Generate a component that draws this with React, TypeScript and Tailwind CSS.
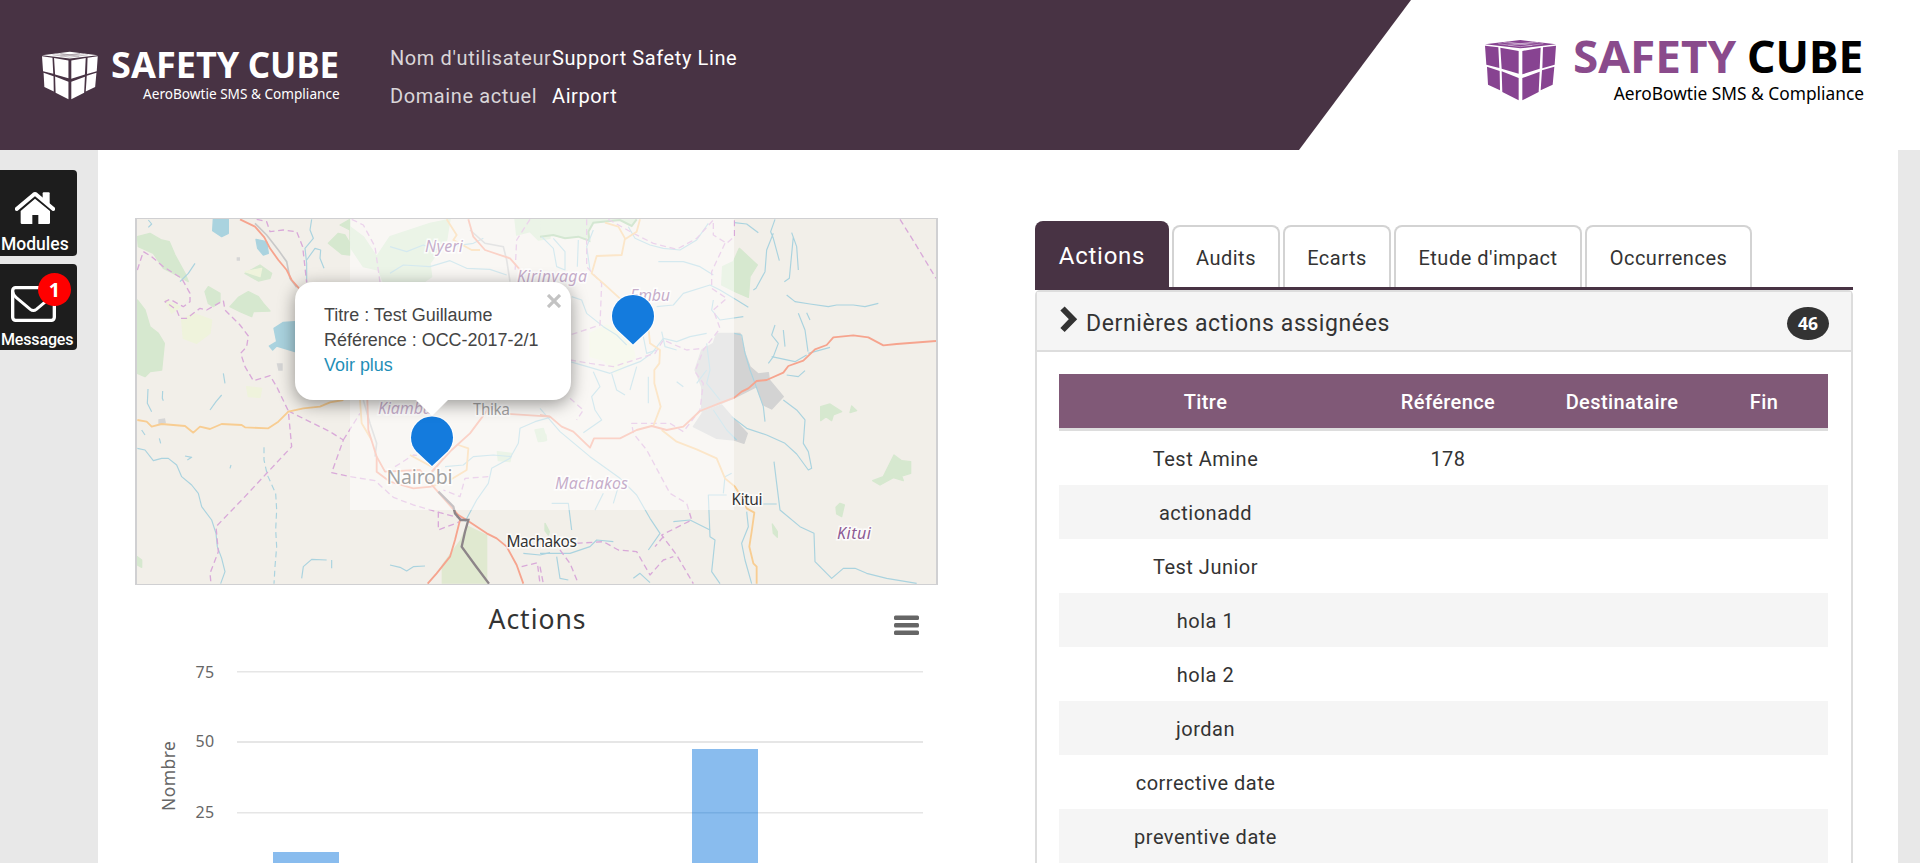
import React from "react";

type Line = { d: string; dash?: boolean };

const water = "#aad3df";
const border = "#d9a9d9";

const westGreens = [
  "M22 80L60 70L95 90L118 95L135 135L165 190L175 215L130 190L100 175L70 130L25 110Z",
  "M22 270L45 300L60 350L85 370L103 400L95 480L60 485L45 500L22 490Z",
  "M300 290L325 262L355 245L385 260L400 280L420 303L370 305L365 320L330 305Z",
  "M225 245L235 230L270 250L270 275L250 290L235 280Z",
  "M345 190L390 165L425 190L420 205L385 213Z",
  "M595 100L625 70L645 75L660 100V135L635 132Z",
  "M630 45L660 28V60Z",
  "M22 1040L35 1050V1072L22 1065Z",
  "M1155 28H1260V85L1225 90L1200 65L1160 75Z",
  "M660 50L700 80L740 140L780 80L900 40L960 28L950 90L900 160L905 200L880 217H760L745 180L700 170L660 110Z",
  "M1215 660L1240 655L1250 690L1225 695Z",
  "M1102 725L1145 730L1140 755L1105 752Z",
];
const westPale = [
  "M155 330L190 310L245 330L240 370L200 400L160 385Z",
  "M350 530L395 535L390 562L355 560Z",
  "M345 185L395 175L390 200Z",
  "M105 270L150 290L125 310Z",
];
const eastGreens = [
  "M0 28H290L275 48L240 28L160 38L145 65L148 92L115 80L75 85L40 75L0 80Z",
  "M598 115L652 165L630 200L625 262L585 245L545 225L548 170L580 155Z",
  "M842 590L870 582L905 605L880 615L875 632L858 620L842 632Z",
  "M935 588L950 602L930 608Z",
  "M1062 735L1085 752L1112 755V790L1085 798L1090 812L1060 803L1020 825L998 812L1030 800Z",
  "M888 892L900 880L913 885L905 920L890 912Z",
  "M697 942L712 965V982L700 970Z",
  "M0 660L18 675V692L0 695Z",
  "M15 940L28 965L25 975L15 962Z",
];

const westWater: Line[] = [
  { d: "M22 715L45 720L70 752L95 745L115 745L140 765L155 800L185 825L205 850L215 890L245 930L258 970L262 1010L275 1045L285 1085L272 1121" },
  { d: "M402 712L402 750L412 795L437 850L440 900L437 960L440 1010L435 1070L432 1121", dash: true },
  { d: "M545 28L540 60L550 85L525 115L530 160L530 217" },
  { d: "M530 150L555 115L572 120L570 145L582 175" },
  { d: "M54 537L52 580L65 605M98 543L97 565L100 572M240 600L258 575L275 555M285 520L280 490" },
  { d: "M780 1065L810 1072L830 1083L850 1070L885 1068M515 1105L520 1070L545 1048L590 1050M605 1050V1075" },
  { d: "M780 110L830 125L880 105L915 118L960 110L1030 100L1060 85M780 190L820 165L900 170L960 152L1010 175L1080 178L1130 195" },
  { d: "M1260 622L1215 635L1170 655L1165 700L1140 745L1085 775L1075 820L1040 870L1005 935" },
  { d: "M945 770L1000 765L1030 740L1090 735L1145 740" },
  { d: "M55 30L65 42L55 52M195 160L175 190L150 215M165 738L185 742L172 750M300 775L303 765M88 685L92 700M35 660L45 675" },
  { d: "M1180 1030L1230 1035L1260 1028" },
];
const westBorders: Line[] = [
  { d: "M22 180L40 125L65 140L100 170L155 205L180 250L180 275L160 290L120 268L105 275L140 300L150 325L170 325L210 295L230 300L280 272L285 300L330 345L355 378L350 410L332 430L345 470L370 512L420 497L440 530L475 603L485 710L410 790L340 865L258 950L265 1025L240 1090L243 1121", dash: true },
  { d: "M475 603L525 628L600 665L640 690L605 788L660 800L735 812L790 862L850 885L930 908L995 925", dash: true },
  { d: "M640 690L690 610M380 28L410 35L420 65L460 60L500 65L518 110L530 217M665 28L700 45L735 110L750 217M1200 28L1160 90L1155 190", dash: true },
  { d: "M795 770L850 735L905 740M925 905V960L990 935M1175 1070L1222 1058L1230 1121M1075 800L1005 805L990 860L940 840", dash: true },
];
const eastWater: Line[] = [
  { d: "M705 28L692 65L700 85L718 152M700 70L680 120L675 185L648 235L640 240M755 68L770 110L775 180M760 80L748 205L733 215" },
  { d: "M740 255L765 275L810 282L865 290L890 285L940 285L975 290L1015 280" },
  { d: "M775 310L795 360L804 425M800 308L810 330M705 345L695 375L715 400L700 440L685 460M695 440L765 455L800 435M730 360L735 410M740 495L775 500L795 482M805 430L870 412" },
  { d: "M583 370L605 375L615 430L630 480L642 512L670 590L675 635" },
  { d: "M575 620L620 655L680 675L735 700L770 732L805 780L815 775L805 725L790 700L795 630L770 600L730 570" },
  { d: "M702 755L710 820L720 900L780 950L822 970L825 1055L875 1105L910 1075L945 1075L980 1090L1040 1105L1130 1120" },
  { d: "M583 38L620 42L655 68M0 595L60 665L150 740L240 805L290 855L330 925L360 970L325 1020" },
  { d: "M670 882L710 882M560 855H505L510 980L525 990L515 1085L540 1121M620 905L625 950L605 1000L615 1050L635 1121" },
  { d: "M95 260L125 270L140 310L190 350L230 375L260 405M90 455L160 475L210 490L260 470L300 455L335 430L370 385L410 395L450 380L500 370" },
  { d: "M265 50L285 85L330 105L370 115L420 120L470 90L505 40M355 155L430 155L480 170L520 195M350 290L400 285L430 250L510 225L540 240L590 270L625 292" },
  { d: "M160 485L180 530L155 560L165 600L185 630L130 668M215 490L230 540L255 555M310 380L320 430L350 420M365 365L375 410L410 420" },
  { d: "M500 400L510 480L500 520L540 570M520 600L560 660L590 690M575 790L555 800L550 850M35 880L85 880L95 960M0 1030L90 1030L150 1010L170 990L220 995" },
  { d: "M280 1105L300 1090L330 1118M50 1040L60 1105L85 1110M400 935L450 930L510 960M160 60L140 110L150 180M5 80L40 115L50 170L75 180L75 125L40 85M115 90L112 170" },
  { d: "M520 270L515 300L540 330L610 320M500 480L470 520M290 470L270 540M325 500V580M410 515L430 530M190 850L165 900M235 830L220 880" },
];
const eastBorders: Line[] = [
  { d: "M1080 28L1125 100L1188 205", dash: true },
  { d: "M140 28L140 170L185 220L180 345L90 375M205 28L280 70L340 100L410 118L470 85L520 30L520 75L560 100L583 80V28", dash: true },
  { d: "M555 100L515 185L515 235L560 265L520 300L540 355L490 420L465 485L490 520L480 600L430 665L390 640L275 640L280 670L320 720L390 850L440 880L455 930L365 975L410 1035L460 1121", dash: true },
  { d: "M90 450L150 460L220 470L345 430L370 390L440 420L490 415M90 565L130 600L110 630M60 1020L90 1060L115 1121M110 1000L190 995L235 1020L290 1025L330 1095L370 1050L400 1040", dash: true },
  { d: "M0 1070L10 1121M370 980L345 1010", dash: true },
];

const redRoadsWest = [
  "M330 28L375 50L403 82L420 115L445 150L470 180L485 210L507 235",
  "M1015 28L1030 80L1065 120L1140 145L1175 185",
  "M712 570L715 660L740 740L765 785L870 780L910 830L985 915L1010 930L1070 970L1100 985L1130 1010L1160 1065L1180 1121",
  "M990 930L975 990L960 1040L920 1090L893 1121",
  "M740 740V785L780 815L850 835L905 830",
  "M905 785L965 720L1020 670L1080 590L1110 610L1260 620",
];
const orangeRoadsWest = [
  "M22 630L50 635L65 650L95 642L165 648L190 668L210 650L240 657L275 642L335 645L345 652L415 655L445 635L475 605L520 595L570 590L600 577L640 570",
  "M950 28L980 75L970 90L1025 120L1050 120",
  "M690 570L695 640L725 690M985 705L1015 715L1010 780L960 810L905 830",
  "M840 735L905 770",
];
const redRoadsEast = [
  "M0 615L30 620L65 650L100 665L150 713L162 685L240 685L290 660L335 648L380 660L430 650L480 603L530 583L583 563L605 545L625 535L650 513L680 510L730 488L745 468L790 452L825 418L860 405L880 382L940 376L985 382L1030 406L1070 402L1188 393",
];
const orangeRoadsEast = [
  "M195 38L235 50L255 85L245 135L170 138L155 190L190 220L250 275L325 350L330 400L360 420L358 460L343 480V520L362 590L340 648",
  "M300 28L290 65L255 88",
  "M365 660L410 695L470 718L530 745L555 805L585 830L610 870L620 895L643 908L635 965L628 1010L640 1060L650 1070V1121",
];

function Lines({ items, color, width }: { items: Line[]; color: string; width: number }) {
  return (
    <>
      {items.map((l) => (
        <path key={l.d} d={l.d} fill="none" stroke={color} strokeWidth={width} strokeLinejoin="round" strokeDasharray={l.dash ? "18 11" : undefined} />
      ))}
    </>
  );
}

function Roads({ items, color }: { items: string[]; color: string }) {
  return (
    <>
      {items.map((d) => (
        <path key={d} d={d} fill="none" stroke={color} strokeWidth={5.5} strokeLinejoin="round" />
      ))}
    </>
  );
}

function Areas({ items, color }: { items: string[]; color: string }) {
  return (
    <>
      {items.map((d) => (
        <path key={d} d={d} fill={color} stroke={color} strokeWidth={4} strokeLinejoin="round" />
      ))}
    </>
  );
}

function Pin({ x, y }: { x: number; y: number }) {
  return (
    <path
      transform={`translate(${x} ${y})`}
      d="M0 0L-15.5 -14.5C-19 -18 -21 -23 -21 -28.5A21 21 0 0 1 21 -28.5C21 -23 19 -18 15.5 -14.5Z"
      fill="#147bdd"
      stroke="#fff"
      strokeWidth={2}
      paintOrder="stroke"
    />
  );
}

function MapCanvas() {
  return (
    <svg className="block h-full w-full" viewBox="137 219 799 365" preserveAspectRatio="none">
      <rect x="137" y="219" width="799" height="365" fill="#f2efe9" />
      <g transform="translate(130 210) scale(0.33333)">
        <Areas items={westGreens} color="#d6e8cf" />
        <Areas items={westPale} color="#eff3dc" />
        <path d="M935 1121V1065L990 990L1010 945L1072 975V1121Z" fill="#e0e9d0" />
        <Areas items={["M250 28H295V70L275 80L248 62Z", "M378 88L410 95L415 130L400 135L383 115Z", "M432 355L460 337L495 335V425L440 408L428 420L418 408L440 395Z"]} color={water} />
        <Lines items={westWater} color={water} width={3.5} />
        <Lines items={westBorders} color={border} width={4} />
        <path d="M375 40L410 75L445 120L470 155L480 205L500 232M1020 60L1065 100L1120 110L1130 150L1140 215M700 570L720 640L740 700L735 740M905 790L940 745" fill="none" stroke="#c9c9c9" strokeWidth="5" />
        <path d="M85 628L105 625L108 640L85 645ZM440 460H458V482H445M320 142H330V152H320Z" fill="#d6d6d6" />
        <Roads items={orangeRoadsWest} color="#f8cd92" />
        <Roads items={redRoadsWest} color="#f6a48e" />
        <path d="M925 845L970 890L975 910L992 930H1015L1005 965L995 1010L1035 1065L1077 1121" fill="none" stroke="#8d8589" strokeWidth="7" />
      </g>
      <g transform="translate(540 210) scale(0.33333)">
        <Areas items={eastGreens} color="#d6e8cf" />
        <Areas items={["M150 370L200 345L270 375L285 440L230 490L190 450L150 440Z"]} color="#eff3dc" />
        <path d="M0 80L40 75L75 85L115 80L148 92L145 65L160 38L240 30L275 48L290 28" fill="none" stroke="#a8cfa4" strokeWidth="6" />
        <Areas items={["M530 370L600 370L615 430L630 470L655 492L685 488L688 510L730 560L695 597L670 585L650 530L580 565L485 605L485 530L465 480L485 420L520 400Z", "M460 650L490 605L545 585L580 625L622 670L612 700L583 690L530 685L490 665Z"]} color="#d3d3d3" />
        <Lines items={eastWater} color={water} width={3.5} />
        <Lines items={eastBorders} color={border} width={4} />
        <Roads items={orangeRoadsEast} color="#f8cd92" />
        <Roads items={redRoadsEast} color="#f6a48e" />
      </g>
      <g fontFamily="'Noto Sans', sans-serif" fontSize="16" stroke="#fff" strokeOpacity={0.8} strokeWidth="3" paintOrder="stroke">
        <g fontStyle="italic" fill="#8c5a94">
          <text x="425" y="251.5" textLength="38">Nyeri</text>
          <text x="517" y="282" textLength="70">Kirinyaga</text>
          <text x="630" y="301" textLength="40">Embu</text>
          <text x="378" y="414" textLength="54">Kiambu</text>
          <text x="555" y="488.5" textLength="73">Machakos</text>
        </g>
        <g fill="#444">
          <text x="473" y="414.5" fontSize="15.5" textLength="37">Thika</text>
          <text x="386.5" y="483.5" fontSize="19.5" textLength="66">Nairobi</text>
        </g>
      </g>
      <rect x="350" y="219" width="384" height="291" fill="#fff" fillOpacity="0.5" />
      <g fontFamily="'Noto Sans', sans-serif" fontSize="15.5" stroke="#fff" strokeOpacity={0.8} strokeWidth="3" paintOrder="stroke" fill="#333">
        <text x="506.5" y="547" textLength="70.5">Machakos</text>
        <text x="731.5" y="504.5" textLength="31">Kitui</text>
        <text x="837" y="539" fontSize="16" fontStyle="italic" fill="#8c5a94" textLength="34">Kitui</text>
      </g>
      <Pin x={432} y={466} />
      <Pin x={633} y={344.5} />
    </svg>
  );
}

function Logo({ className, cube, first, second }: { className: string; cube: string; first: string; second: string }) {
  return (
    <svg className={className} viewBox="0 -20 382 90">
      <g transform="scale(0.33333) translate(-30 -44)">
        <g fill={cube}>
          <path d="M30 57L136 44L243 57L136 69Z" />
          <path d="M30 61L70 66L73 128L34 118ZM76 67L131 77V145L80 130ZM36 124L74 137L75 195L39 178ZM80 138L131 158V225L82 200Z" />
          <path d="M142 77L197 67L194 130L142 147ZM204 66L243 61L239 118L202 129ZM142 158L194 139L191 200L142 225ZM201 135L238 124L233 178L197 195Z" />
        </g>
        <path d="M70 55L136 64L205 55M85 51L136 57L190 51M100 60L175 50M172 61L100 50" fill="none" stroke={second === "#fff" ? "#483344" : "#fff"} strokeOpacity="0.6" strokeWidth="2" />
      </g>
      <g fontFamily="'Noto Sans', sans-serif" fontWeight="700" fontSize="44.5">
        <text x="88" y="33" fill={first} textLength="163.3" lengthAdjust="spacingAndGlyphs">SAFETY</text>
        <text x="262" y="33" fill={second} textLength="116.3" lengthAdjust="spacingAndGlyphs">CUBE</text>
      </g>
      <text x="128.7" y="59.7" fontFamily="'Noto Sans', sans-serif" fontSize="18" fill={second} textLength="250.3" lengthAdjust="spacingAndGlyphs">AeroBowtie SMS &amp; Compliance</text>
    </svg>
  );
}

function Header() {
  return (
    <header className="flex h-[150px] items-start justify-between bg-white">
      <div className="flex h-[150px] w-[1411px] items-start bg-[#483344] pl-[42px] [clip-path:polygon(0_0,100%_0,1299px_100%,0_100%)]">
        <Logo className="mt-[36px] h-[71px] w-[300px]" cube="#fff" first="#fff" second="#fff" />
        <dl className="mt-[39px] ml-12 grid grid-cols-[162px_auto] text-[20px] leading-[38px] tracking-[0.6px] whitespace-nowrap">
          <dt className="text-[#dad6d9]">Nom d'utilisateur</dt>
          <dd className="text-white">Support Safety Line</dd>
          <dt className="text-[#dad6d9]">Domaine actuel</dt>
          <dd className="text-white">Airport</dd>
        </dl>
      </div>
      <Logo className="mt-[20px] mr-[53px] h-[90px] w-[382px]" cube="#874391" first="#8a4b8c" second="#000" />
    </header>
  );
}

function SideNav() {
  return (
    <nav className="flex w-[98px] flex-col gap-2 pt-5 font-medium text-white">
      <a className="flex h-[86px] w-[77px] flex-col rounded-r bg-[#1d1d1d]">
        <svg className="mt-[22px] ml-[15px] h-[33px] w-10 shrink-0" viewBox="0 0 120 99">
          <path d="M60 20L105 57V92Q105 96 101 96H70V69H52V96H21Q17 96 17 92V57Z" fill="#fff" />
          <path d="M4 52L60 6L116 52" fill="none" stroke="#1d1d1d" strokeWidth="19" />
          <path d="M83 4Q83 1 86 1H101Q104 1 104 4V36L83 22Z" fill="#fff" />
          <path d="M5 51L56 8Q60 5 64 8L115 51" fill="none" stroke="#fff" strokeWidth="12" strokeLinecap="round" strokeLinejoin="round" />
        </svg>
        <span className="pt-[7px] pl-px text-[17.5px] leading-6">Modules</span>
      </a>
      <a className="relative flex h-[86px] w-[77px] flex-col rounded-r bg-[#1d1d1d]">
        <svg className="mt-[22px] ml-[11px] h-9 w-[45px] shrink-0" viewBox="0 0 135 108" fill="none" stroke="#fff" strokeWidth="10">
          <rect x="5" y="5" width="125" height="98" rx="9" />
          <path d="M5 17Q7 28 16 35L58 70Q67 77 76 70L118 35Q128 27 130 17" strokeWidth="9" />
        </svg>
        <span className="pt-[6px] pl-px text-[16px] leading-6 tracking-[-0.15px]">Messages</span>
        <span className="absolute top-[9px] left-[38px] flex size-[33px] items-center justify-center rounded-full bg-[#f00] font-['Open_Sans',sans-serif] text-[20px] font-bold">1</span>
      </a>
    </nav>
  );
}

function MapPanel() {
  return (
    <div className="relative h-[367px] w-[803px] border-x-2 border-y border-[#d0d0d2]">
      <MapCanvas />
      <div className="absolute top-[63px] left-[158px] h-[118px] w-[276px] rounded-[18px] bg-white pt-[21px] pl-[29px] font-['Liberation_Sans',sans-serif] text-[17.95px] leading-[25px] tracking-normal text-[#444] shadow-[0_4px_17px_rgba(0,0,0,0.4)]">
        <p>Titre : Test Guillaume</p>
        <p>Référence : OCC-2017-2/1</p>
        <p className="text-[#1f8fb8]">Voir plus</p>
        <svg className="absolute top-[12px] right-2.5 size-[14px]" viewBox="0 0 14 14" stroke="#c3c3c3" strokeWidth="3.2">
          <path d="M1 1L13 13M13 1L1 13" />
        </svg>
        <svg className="absolute top-[117px] left-[120px] h-[17px] w-[34px]" viewBox="0 0 34 17">
          <path d="M0 0H34L17 17Z" fill="#fff" />
        </svg>
      </div>
    </div>
  );
}

function Chart() {
  return (
    <svg className="block h-[278px] w-[803px]" viewBox="135 585 803 278" fontFamily="'Noto Sans', sans-serif">
      <text x="537" y="629" textAnchor="middle" fontSize="26.5" textLength="97" fill="#333">Actions</text>
      <g fill="#666">
        <rect x="894" y="615.5" width="25" height="4.6" rx="1.5" />
        <rect x="894" y="623" width="25" height="4.6" rx="1.5" />
        <rect x="894" y="630.5" width="25" height="4.6" rx="1.5" />
      </g>
      <g fill="#e6e6e6">
        <rect x="237" y="671" width="686" height="1.5" />
        <rect x="237" y="741" width="686" height="2" />
        <rect x="237" y="812" width="686" height="1.5" />
      </g>
      <g fill="#7cb5ec" fillOpacity="0.9">
        <rect x="273" y="852" width="66" height="11" />
        <rect x="692" y="749" width="66" height="114" />
      </g>
      <rect x="692" y="812" width="66" height="1.5" fill="#76ade2" />
      <g fill="#666" fontSize="16" textAnchor="end" letterSpacing="0.4">
        <text x="214.5" y="678">75</text>
        <text x="214.5" y="747">50</text>
        <text x="214.5" y="818">25</text>
      </g>
      <text transform="translate(175 811) rotate(-90)" fill="#666" fontSize="17.5" textLength="70">Nombre</text>
    </svg>
  );
}

const tabs = [
  { label: "Audits", width: "w-[108px]" },
  { label: "Ecarts", width: "w-[108px]" },
  { label: "Etude d'impact", width: "w-[188px]" },
  { label: "Occurrences", width: "w-[167px]" },
];

const rows = [
  ["Test Amine", "178"],
  ["actionadd", ""],
  ["Test Junior", ""],
  ["hola 1", ""],
  ["hola 2", ""],
  ["jordan", ""],
  ["corrective date", ""],
  ["preventive date", ""],
];

function ActionsPanel() {
  return (
    <section className="flex w-[818px] flex-col pt-[71px] text-[#333]">
      <div className="flex h-[69px] items-end gap-[3px] border-b-[3px] border-[#483344] text-[20px] tracking-[0.5px]">
        <div className="flex h-[66px] w-[134px] items-center justify-center rounded-t-lg bg-[#483344] pt-[3px] text-[24px] tracking-[0.75px] text-white">Actions</div>
        {tabs.map((t) => (
          <div key={t.label} className={`flex h-[62px] items-center justify-center rounded-t-lg border-2 border-b-0 border-[#d3d3d3] pt-px whitespace-nowrap ${t.width}`}>
            {t.label}
          </div>
        ))}
      </div>
      <div className="flex h-[573px] flex-col rounded-t-[5px] border-2 border-b-0 border-[#ddd]">
        <div className="flex h-[60px] shrink-0 items-center border-b-2 border-[#ddd] bg-[#f5f5f5] pr-[22px] pl-[23px]">
          <svg className="mb-1 h-[27px] w-[18px]" viewBox="0 0 18 27">
            <path d="M2.5 2.5L13 13.2L2.5 24" fill="none" stroke="#333" strokeWidth="6" />
          </svg>
          <h2 className="grow pt-1.5 pl-2 text-[23px] tracking-[0.6px]">Dernières actions assignées</h2>
          <span className="mt-1 flex h-[33px] w-[42px] items-center justify-center rounded-[50%] bg-[#333] font-['Open_Sans',sans-serif] text-[17.5px] font-bold text-white">46</span>
        </div>
        <table className="mt-[22px] ml-[22px] w-[769px] table-fixed border-collapse text-center text-[20px] tracking-[0.5px]">
          <colgroup>
            <col className="w-[293px]" />
            <col className="w-[192px]" />
            <col className="w-[156px]" />
            <col className="w-[128px]" />
          </colgroup>
          <thead>
            <tr className="h-[54px] bg-[#805977] text-white">
              <th className="p-0 pt-0.5 font-medium tracking-[0.4px]">Titre</th>
              <th className="p-0 pt-0.5 font-medium tracking-[0.4px]">Référence</th>
              <th className="p-0 pt-0.5 font-medium tracking-[0.4px]">Destinataire</th>
              <th className="p-0 pt-0.5 font-medium tracking-[0.4px]">Fin</th>
            </tr>
            <tr className="h-[3px] bg-[#ddd]">
              <th colSpan={4} className="h-[3px] p-0 leading-none"></th>
            </tr>
          </thead>
          <tbody>
            {rows.map(([title, ref]) => (
              <tr key={title} className="h-[54px] even:bg-[#f5f5f5]">
                <td className="p-0 pt-0.5">{title}</td>
                <td className="p-0 pt-0.5">{ref}</td>
                <td></td>
                <td></td>
              </tr>
            ))}
          </tbody>
        </table>
      </div>
    </section>
  );
}

export default function App() {
  return (
    <div className="flex h-[863px] w-[1920px] flex-col overflow-hidden bg-[#e8e8e8] font-[Roboto,sans-serif]">
      <Header />
      <div className="flex grow">
        <SideNav />
        <main className="flex w-[1800px] gap-[97px] bg-white pl-[37px]">
          <section className="w-[803px] pt-[68px]">
            <MapPanel />
            <Chart />
          </section>
          <ActionsPanel />
        </main>
      </div>
    </div>
  );
}
